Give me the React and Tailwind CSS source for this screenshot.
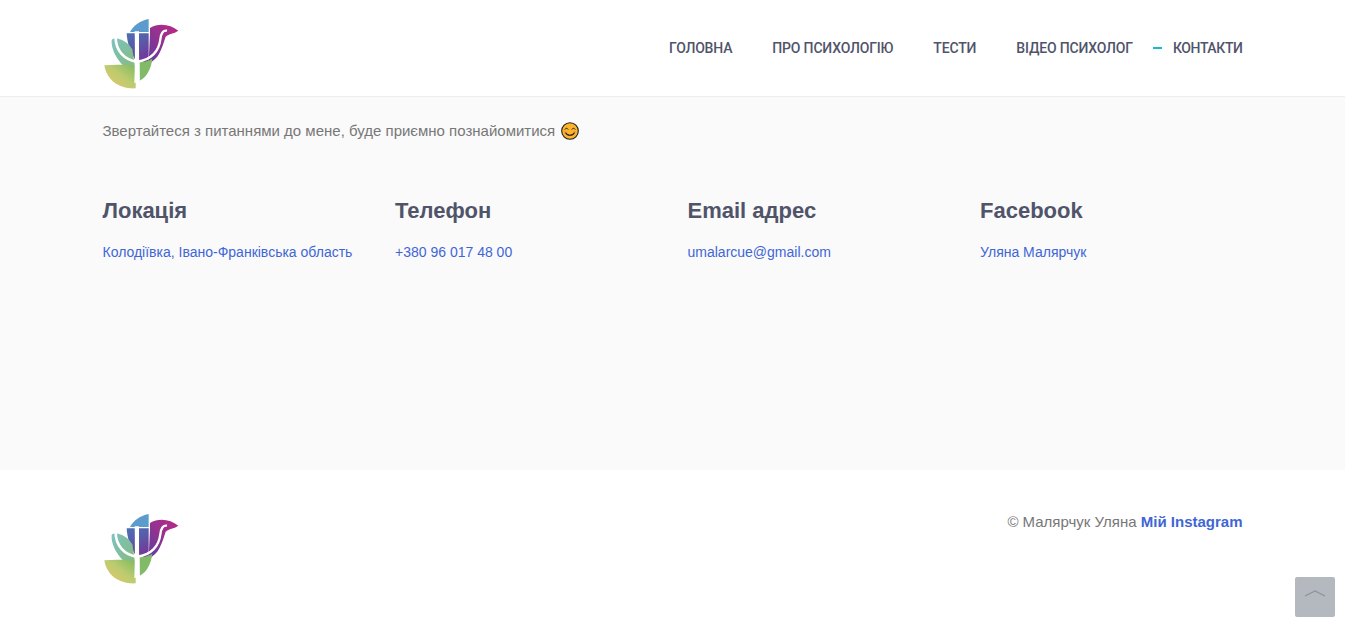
import React from 'react';

const navItems = ['ГОЛОВНА', 'ПРО ПСИХОЛОГІЮ', 'ТЕСТИ', 'ВІДЕО ПСИХОЛОГ'];

const columns = [
  { title: 'Локація', text: 'Колодіївка, Івано-Франківська область' },
  { title: 'Телефон', text: '+380 96 017 48 00' },
  { title: 'Email адрес', text: 'umalarcue@gmail.com' },
  { title: 'Facebook', text: 'Уляна Малярчук' },
];

const Logo = ({ id }) => (
  <svg width="95" height="85" viewBox="0 0 285 255" className="block shrink-0">
    <defs>
      <linearGradient id={`${id}-bottom`} x1="0" y1="1" x2="1" y2="0">
        <stop offset="0" stopColor="#e9c76c" />
        <stop offset="0.55" stopColor="#bccb6f" />
        <stop offset="1" stopColor="#7dba62" />
      </linearGradient>
      <linearGradient id={`${id}-leaf`} x1="0" y1="0" x2="1" y2="1">
        <stop offset="0" stopColor="#7cc2c2" />
        <stop offset="1" stopColor="#86bb7e" />
      </linearGradient>
      <linearGradient id={`${id}-mid`} x1="0" y1="0" x2="0.4" y2="1">
        <stop offset="0" stopColor="#4a70b4" />
        <stop offset="0.5" stopColor="#5a5aa8" />
        <stop offset="1" stopColor="#73399a" />
      </linearGradient>
      <linearGradient id={`${id}-wing`} x1="0" y1="1" x2="1" y2="0">
        <stop offset="0" stopColor="#5f3d9c" />
        <stop offset="0.55" stopColor="#98308f" />
        <stop offset="1" stopColor="#bb2a85" />
      </linearGradient>
      <filter id={`${id}-soft`} x="-5%" y="-5%" width="110%" height="110%">
        <feGaussianBlur stdDeviation="2.2" />
      </filter>
    </defs>
    <g filter={`url(#${id}-soft)`}>
      <path d="M104 68C114 48 134 32 161 27V66H104Z" fill="#5c9ccc" />
      <path d="M95 70H161V156L125 156C106 128 96 98 95 70Z" fill={`url(#${id}-mid)`} />
      <path d="M165 54C190 38 226 42 250 62C236 72 222 70 212 80C206 98 202 112 194 128C186 144 174 154 161 160L165 70Z" fill={`url(#${id}-wing)`} />
      <path d="M50 90C54 84 64 82 74 88C88 92 100 100 112 118L120 168H86C62 145 48 115 50 90Z" fill={`url(#${id}-leaf)`} />
      <path d="M134 156C146 156 158 154 172 146C168 178 154 202 134 212Z" fill="#82bb68" />
      <path d="M28 166C60 163 96 164 122 168V235C74 238 35 212 28 166Z" fill={`url(#${id}-bottom)`} />
      <g fill="none" stroke="#fff">
        <path d="M62 82C62 122 88 150 126 155" strokeWidth="8" />
        <path d="M216 62C204 60 198 70 196 88C192 122 170 150 126 155" strokeWidth="7" />
      </g>
      <path d="M119 64H132C132 110 132 170 134 212L118 220C120 170 120 110 119 64Z" fill="#fff" />
    </g>
  </svg>
);

const Smile = () => (
  <svg width="18" height="18" viewBox="0 0 18 18" className="ml-[6px] shrink-0">
    <circle cx="9" cy="9" r="8.3" fill="#fbb42c" stroke="#1d1d1b" strokeWidth="1.1" />
    <path d="M4 7.2C4.8 5.9 6.2 5.9 7 7.2M11 7.2C11.8 5.9 13.2 5.9 14 7.2" fill="none" stroke="#1d1d1b" strokeWidth="1" strokeLinecap="round" />
    <path d="M4.5 10.5C6 14.2 12 14.2 13.5 10.5" fill="none" stroke="#1d1d1b" strokeWidth="1.1" strokeLinecap="round" />
    <circle cx="4.2" cy="10" r="1.3" fill="#f58a4b" opacity="0.7" />
    <circle cx="13.8" cy="10" r="1.3" fill="#f58a4b" opacity="0.7" />
  </svg>
);

export default function App() {
  return (
    <div className="font-['Liberation_Sans',Arial,sans-serif] text-[#777777] bg-white h-[627px] overflow-hidden">
      <header className="h-[97px] border-b border-[#eeeeee] bg-white">
        <div className="w-[1140px] mx-auto h-full flex items-center justify-between">
          <div className="-ml-[7.5px] mt-[9px]">
            <Logo id="top" />
          </div>
          <nav className="flex items-center font-['Roboto',sans-serif] font-medium text-[14px] tracking-[-0.17px] text-[#50546a]">
            {navItems.map((item) => (
              <a key={item} className="mr-[40px] last:mr-0">{item}</a>
            ))}
            <span className="-ml-[20px] mr-[11px] w-[9px] h-[2px] bg-[#14b9d5]" />
            <a className="tracking-[-0.4px]">КОНТАКТИ</a>
          </nav>
        </div>
      </header>

      <main className="h-[373px] bg-[#fafafa]">
        <div className="w-[1140px] mx-auto pt-[24px]">
          <p className="flex items-center h-[20px] text-[15px]">
            Звертайтеся з питаннями до мене, буде приємно познайомитися
            <Smile />
          </p>
          <div className="grid grid-cols-4 gap-x-[30px] mt-[57px]">
            {columns.map((col) => (
              <div key={col.title}>
                <h3 className="text-[22px] leading-[26px] font-bold text-[#50546a]">{col.title}</h3>
                <a className="block mt-[18px] text-[14px] leading-[20px] text-[#3f66d6]">{col.text}</a>
              </div>
            ))}
          </div>
        </div>
      </main>

      <footer className="bg-white">
        <div className="w-[1140px] mx-auto flex justify-between pt-[35px]">
          <div className="-ml-[7.5px]">
            <Logo id="bottom" />
          </div>
          <p className="text-[15px] leading-[20px] mt-[7px]">
            © Малярчук Уляна <a className="font-bold text-[#3f66d6]">Мій Instagram</a>
          </p>
        </div>
      </footer>

      <a className="fixed right-[10px] bottom-[10px] w-[40px] h-[40px] rounded-[2px] bg-[#b4b8bf] flex items-center justify-center">
        <svg width="22" height="8" viewBox="0 0 22 8" className="-mt-[8px]">
          <path d="M1 7L11 2L21 7" fill="none" stroke="#8f939b" strokeWidth="1.3" />
        </svg>
      </a>
    </div>
  );
}
